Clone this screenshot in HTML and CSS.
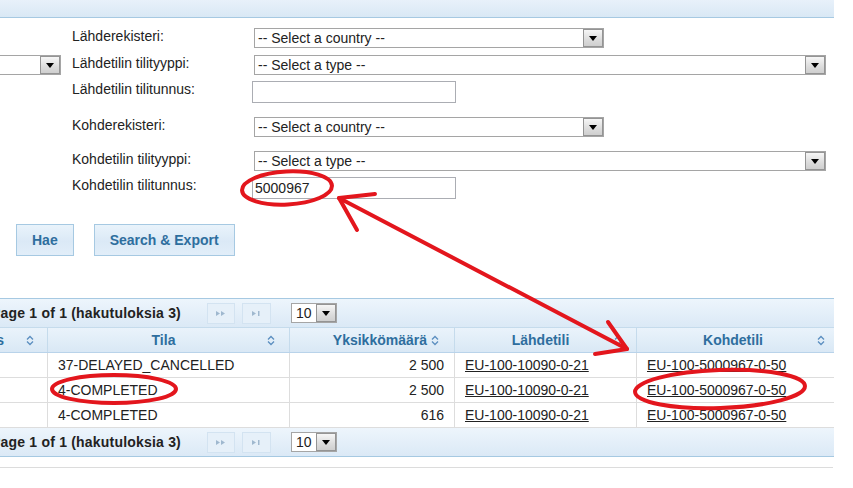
FILE: index.html
```html
<!DOCTYPE html>
<html lang="fi">
<head>
<meta charset="utf-8">
<title>Tapahtumahaku</title>
<link rel="stylesheet" href="styles.css">
</head>
<body>
<div class="page">
  <div class="topbar"></div>

  <div class="search-form">
    <div class="combo left-combo"><span class="combo-text"></span><span class="combo-btn"><svg width="8" height="5" viewBox="0 0 8 5"><path d="M0 0H8L4 5Z" fill="#000"/></svg></span></div>

    <div class="form-label">Lähderekisteri:</div>
    <div class="form-field"><div class="combo combo-country"><span class="combo-text">-- Select a country --</span><span class="combo-btn"><svg width="8" height="5" viewBox="0 0 8 5"><path d="M0 0H8L4 5Z" fill="#000"/></svg></span></div></div>

    <div class="form-label">Lähdetilin tilityyppi:</div>
    <div class="form-field"><div class="combo combo-type"><span class="combo-text">-- Select a type --</span><span class="combo-btn"><svg width="8" height="5" viewBox="0 0 8 5"><path d="M0 0H8L4 5Z" fill="#000"/></svg></span></div></div>

    <div class="form-label">Lähdetilin tilitunnus:</div>
    <div class="form-field"><input class="text-input" type="text" value=""></div>

    <div class="form-label">Kohderekisteri:</div>
    <div class="form-field"><div class="combo combo-country"><span class="combo-text">-- Select a country --</span><span class="combo-btn"><svg width="8" height="5" viewBox="0 0 8 5"><path d="M0 0H8L4 5Z" fill="#000"/></svg></span></div></div>

    <div class="form-label">Kohdetilin tilityyppi:</div>
    <div class="form-field"><div class="combo combo-type"><span class="combo-text">-- Select a type --</span><span class="combo-btn"><svg width="8" height="5" viewBox="0 0 8 5"><path d="M0 0H8L4 5Z" fill="#000"/></svg></span></div></div>

    <div class="form-label">Kohdetilin tilitunnus:</div>
    <div class="form-field"><input class="text-input" type="text" value="5000967"></div>
  </div>

  <div class="actions">
    <button class="btn" type="button">Hae</button>
    <button class="btn" type="button">Search &amp; Export</button>
  </div>

  <div class="datatable" role="table">
    <div class="paginator paginator-top">
      <span class="pg-report">Page 1 of 1 (hakutuloksia 3)</span>
      <span class="pg-btn pg-next"><svg width="12" height="7" viewBox="0 0 12 7"><path d="M1 1L5 3.5L1 6ZM6 1L10 3.5L6 6Z" fill="#9fb8cf"/></svg></span>
      <span class="pg-btn pg-last"><svg width="11" height="7" viewBox="0 0 11 7"><path d="M1 1L5 3.5L1 6Z" fill="#9fb8cf"/><rect x="7" y="1" width="1.5" height="5" fill="#9fb8cf"/></svg></span>
      <div class="combo pg-select"><span class="combo-text">10</span><span class="combo-btn"><svg width="8" height="5" viewBox="0 0 8 5"><path d="M0 0H8L4 5Z" fill="#000"/></svg></span></div>
    </div>

    <div class="dt-head" role="row">
      <div class="th th-first" role="columnheader"><span class="th-label">Tapahtumatunnus</span><svg class="sort" width="10" height="11" viewBox="0 0 10 11"><path d="M2 4.5L5 1.5L8 4.5M2 6.5L5 9.5L8 6.5" fill="none" stroke="#5b8ec0" stroke-width="1.3"/></svg></div>
      <div class="th" role="columnheader"><span class="th-label">Tila</span><svg class="sort" width="10" height="11" viewBox="0 0 10 11"><path d="M2 4.5L5 1.5L8 4.5M2 6.5L5 9.5L8 6.5" fill="none" stroke="#5b8ec0" stroke-width="1.3"/></svg></div>
      <div class="th th-num" role="columnheader"><span class="th-label">Yksikkömäärä</span><svg class="sort" width="10" height="11" viewBox="0 0 10 11"><path d="M2 4.5L5 1.5L8 4.5M2 6.5L5 9.5L8 6.5" fill="none" stroke="#5b8ec0" stroke-width="1.3"/></svg></div>
      <div class="th" role="columnheader"><span class="th-label">Lähdetili</span><svg class="sort" width="10" height="11" viewBox="0 0 10 11"><path d="M2 4.5L5 1.5L8 4.5M2 6.5L5 9.5L8 6.5" fill="none" stroke="#5b8ec0" stroke-width="1.3"/></svg></div>
      <div class="th th-last" role="columnheader"><span class="th-label">Kohdetili</span><svg class="sort" width="10" height="11" viewBox="0 0 10 11"><path d="M2 4.5L5 1.5L8 4.5M2 6.5L5 9.5L8 6.5" fill="none" stroke="#5b8ec0" stroke-width="1.3"/></svg></div>
    </div>

    <div class="dt-row" role="row">
      <div class="td" role="cell"></div>
      <div class="td" role="cell">37-DELAYED_CANCELLED</div>
      <div class="td td-num" role="cell">2 500</div>
      <div class="td" role="cell"><a href="#">EU-100-10090-0-21</a></div>
      <div class="td" role="cell"><a href="#">EU-100-5000967-0-50</a></div>
    </div>
    <div class="dt-row" role="row">
      <div class="td" role="cell"></div>
      <div class="td" role="cell">4-COMPLETED</div>
      <div class="td td-num" role="cell">2 500</div>
      <div class="td" role="cell"><a href="#">EU-100-10090-0-21</a></div>
      <div class="td" role="cell"><a href="#">EU-100-5000967-0-50</a></div>
    </div>
    <div class="dt-row" role="row">
      <div class="td" role="cell"></div>
      <div class="td" role="cell">4-COMPLETED</div>
      <div class="td td-num" role="cell">616</div>
      <div class="td" role="cell"><a href="#">EU-100-10090-0-21</a></div>
      <div class="td" role="cell"><a href="#">EU-100-5000967-0-50</a></div>
    </div>

    <div class="paginator paginator-bottom">
      <span class="pg-report">Page 1 of 1 (hakutuloksia 3)</span>
      <span class="pg-btn pg-next"><svg width="12" height="7" viewBox="0 0 12 7"><path d="M1 1L5 3.5L1 6ZM6 1L10 3.5L6 6Z" fill="#9fb8cf"/></svg></span>
      <span class="pg-btn pg-last"><svg width="11" height="7" viewBox="0 0 11 7"><path d="M1 1L5 3.5L1 6Z" fill="#9fb8cf"/><rect x="7" y="1" width="1.5" height="5" fill="#9fb8cf"/></svg></span>
      <div class="combo pg-select"><span class="combo-text">10</span><span class="combo-btn"><svg width="8" height="5" viewBox="0 0 8 5"><path d="M0 0H8L4 5Z" fill="#000"/></svg></span></div>
    </div>
  </div>

  <div class="footer-line"></div>
</div>

<svg class="annotations" width="853" height="488" viewBox="0 0 853 488">
  <g fill="none" stroke="#e3161d" stroke-width="4" stroke-linecap="round" stroke-linejoin="round">
    <ellipse cx="287" cy="188" rx="45" ry="16.5" transform="rotate(-3 287 188)"/>
    <ellipse cx="114" cy="389" rx="62" ry="14"/>
    <ellipse cx="720" cy="389" rx="85" ry="19" transform="rotate(-2 720 389)"/>
    <path d="M339 198L627 349"/>
    <path d="M375 194L339 198L357 230"/>
    <path d="M608 322L627 349L595 354"/>
  </g>
</svg>
</body>
</html>
```

FILE: styles.css
```css
* {
  box-sizing: border-box;
}

html,
body {
  margin: 0;
  padding: 0;
}

body {
  position: relative;
  width: 853px;
  height: 488px;
  overflow: hidden;
  background: #ffffff;
  font-family: "Liberation Sans", Arial, sans-serif;
  font-size: 14px;
  color: #222222;
}

.page {
  margin-left: -100px;
  width: 934px;
}

.topbar {
  height: 18px;
  border-bottom: 1px solid #a6c9e2;
  background: linear-gradient(#e8f1fa, #d9e8f5);
}

/* search form */
.search-form {
  display: grid;
  grid-template-columns: 172px 180px 1fr;
  grid-template-rows: 27px 26px 36px 34px 26px 22px;
  align-items: start;
  margin-top: 10px;
}

.form-label {
  grid-column: 2;
  line-height: 16px;
  white-space: nowrap;
}

.form-field {
  grid-column: 3;
}

.combo {
  display: flex;
  align-items: center;
  height: 20px;
  border: 1px solid #a5a5a5;
  background: #ffffff;
  margin-left: 2px;
}

.combo-text {
  flex: 1;
  padding-left: 3px;
  white-space: nowrap;
  overflow: hidden;
  line-height: 16px;
}

.combo-btn {
  display: flex;
  align-items: center;
  justify-content: center;
  width: 20px;
  height: 18px;
  border: 1px solid #949494;
  background: linear-gradient(#f6f6f6, #dcdcdc 60%, #cfcfcf);
}

.left-combo {
  grid-column: 1;
  grid-row: 2;
  justify-self: end;
  width: 130px;
  margin-right: 11px;
}

.combo-country {
  width: 350px;
}

.combo-type {
  width: 572px;
}

.text-input {
  display: block;
  width: 204px;
  height: 22px;
  margin: 0;
  padding: 0 2px;
  border: 1px solid #abadb3;
  background: #ffffff;
  font-family: "Liberation Sans", Arial, sans-serif;
  font-size: 14px;
  color: #222222;
}

/* buttons */
.actions {
  display: flex;
  gap: 20px;
  margin-top: 25px;
  padding-left: 116px;
}

.btn {
  height: 32px;
  margin: 0;
  padding: 0 15px;
  border: 1px solid #a6c9e2;
  background: linear-gradient(#e9f3fb, #dbe9f6 55%, #e2eef9);
  color: #2e6e9e;
  font-family: "Liberation Sans", Arial, sans-serif;
  font-size: 14px;
  font-weight: bold;
}

/* data table */
.datatable {
  margin-top: 42px;
}

.paginator {
  display: flex;
  align-items: center;
  height: 29px;
  padding-left: 91px;
  background: linear-gradient(#edf5fc, #dbe9f6);
}

.paginator-top {
  border-top: 1px solid #a6c9e2;
}

.paginator-bottom {
  border-bottom: 1px solid #a6c9e2;
}

.pg-report {
  width: 216px;
  font-weight: bold;
  color: #222222;
  white-space: nowrap;
  letter-spacing: 0.2px;
}

.pg-btn {
  display: flex;
  align-items: center;
  justify-content: center;
  height: 21px;
  border: 1px solid #d3e3f1;
  background: #e6f0f9;
}

.pg-next {
  width: 28px;
  margin-right: 7px;
}

.pg-last {
  width: 29px;
  margin-right: 20px;
}

.pg-select {
  width: 46px;
  margin-left: 0;
}

.pg-select .combo-text {
  padding-left: 4px;
}

.dt-head,
.dt-row {
  display: grid;
  grid-template-columns: 147px 242px 165px 182px 198px;
}

.dt-head {
  height: 26px;
  border-top: 1px solid #c5dbec;
  border-bottom: 1px solid #b9d3ea;
  background: linear-gradient(#eaf3fb, #d9e8f5);
}

.th {
  display: flex;
  align-items: center;
  padding: 0 13px;
  border-left: 1px solid #c5dbec;
  color: #2e6e9e;
  font-weight: bold;
  white-space: nowrap;
  overflow: hidden;
}

.th-label {
  flex: 1;
  text-align: center;
}

.sort {
  flex: none;
}

.th-first {
  border-left: none;
  justify-content: flex-end;
  padding: 0 12px 0 0;
}

.th-first .th-label {
  flex: none;
  margin-right: 21px;
}

.th-num {
  justify-content: flex-end;
  gap: 3px;
  padding-right: 14px;
}

.th-num .th-label {
  flex: none;
}

.th-last {
  padding: 0 8px 0 13px;
}

.dt-row {
  height: 25px;
  border-bottom: 1px solid #dddddd;
}

.td {
  display: flex;
  align-items: center;
  padding: 0 10px;
  border-left: 1px solid #dddddd;
  white-space: nowrap;
}

.td:first-child {
  border-left: none;
}

.td-num {
  justify-content: flex-end;
}

.td a {
  color: #222222;
  text-decoration: underline;
}

.footer-line {
  margin-top: 10px;
  width: 933px;
  height: 1px;
  background: #dcdcdc;
}

/* hand-drawn red annotations over the screenshot */
.annotations {
  position: absolute;
  left: 0;
  top: 0;
  pointer-events: none;
}
```
